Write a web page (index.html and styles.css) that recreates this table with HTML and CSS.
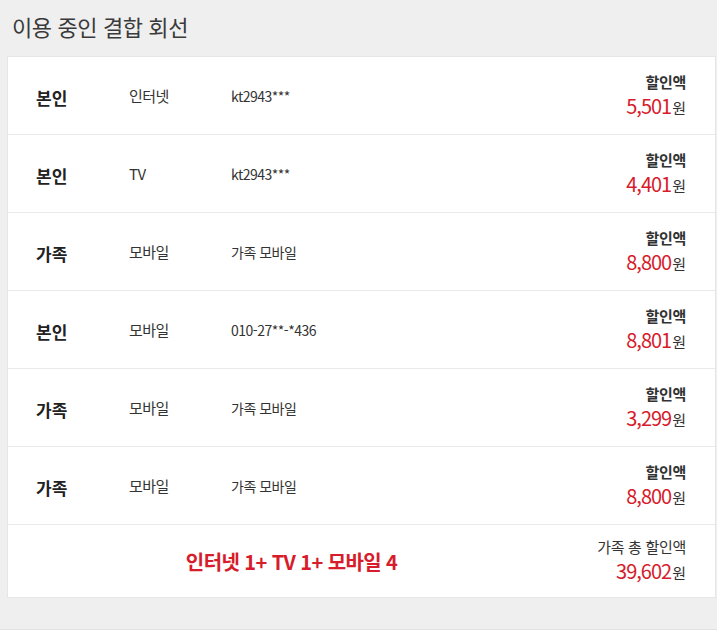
FILE: index.html
```html
<!DOCTYPE html>
<html lang="ko">
<head>
    <meta charset="UTF-8">
    <meta name="viewport" content="width=device-width, initial-scale=1.0">
    <title>이용 중인 결합 회선</title>
    <link rel="stylesheet" href="styles.css">
</head>
<body>
    <div class="page">
        <h2 class="title">이용 중인 결합 회선</h2>

        <ul class="lines">
            <li class="line">
                <span class="owner">본인</span>
                <span class="kind">인터넷</span>
                <span class="number">kt2943***</span>
                <div class="discount">
                    <span class="label">할인액</span>
                    <span class="amount"><em>5,501</em>원</span>
                </div>
            </li>
            <li class="line">
                <span class="owner">본인</span>
                <span class="kind">TV</span>
                <span class="number">kt2943***</span>
                <div class="discount">
                    <span class="label">할인액</span>
                    <span class="amount"><em>4,401</em>원</span>
                </div>
            </li>
            <li class="line">
                <span class="owner">가족</span>
                <span class="kind">모바일</span>
                <span class="number">가족 모바일</span>
                <div class="discount">
                    <span class="label">할인액</span>
                    <span class="amount"><em>8,800</em>원</span>
                </div>
            </li>
            <li class="line">
                <span class="owner">본인</span>
                <span class="kind">모바일</span>
                <span class="number">010-27**-*436</span>
                <div class="discount">
                    <span class="label">할인액</span>
                    <span class="amount"><em>8,801</em>원</span>
                </div>
            </li>
            <li class="line">
                <span class="owner">가족</span>
                <span class="kind">모바일</span>
                <span class="number">가족 모바일</span>
                <div class="discount">
                    <span class="label">할인액</span>
                    <span class="amount"><em>3,299</em>원</span>
                </div>
            </li>
            <li class="line">
                <span class="owner">가족</span>
                <span class="kind">모바일</span>
                <span class="number">가족 모바일</span>
                <div class="discount">
                    <span class="label">할인액</span>
                    <span class="amount"><em>8,800</em>원</span>
                </div>
            </li>
            <li class="line total">
                <span class="summary">인터넷 1+ TV 1+ 모바일 4</span>
                <div class="discount">
                    <span class="label">가족 총 할인액</span>
                    <span class="amount"><em>39,602</em>원</span>
                </div>
            </li>
        </ul>
    </div>
</body>
</html>
```

FILE: styles.css
```css
body {
    margin: 0;
    background-color: #efefef;
    font-family: "Noto Sans CJK KR", "Noto Sans", sans-serif;
    color: #333;
}

.page {
    height: 629px;
    padding: 0 1px 0 7px;
    border-bottom: 1px solid #e2e2e2;
}

.title {
    margin: 0;
    padding: 10px 0 0 5px;
    height: 46px;
    box-sizing: border-box;
    height: 56px;
    font-size: 22px;
    font-weight: 400;
    color: #3a3a3a;
    letter-spacing: -0.4px;
}

.lines {
    list-style: none;
    margin: 0;
    padding: 0;
    background-color: #fff;
    border: 1px solid #e6e6e6;
}

.line {
    display: flex;
    align-items: center;
    height: 77px;
    padding: 0 29px 0 28px;
    border-bottom: 1px solid #e9e9e9;
}

.line:last-child {
    border-bottom: none;
    height: 72px;
}

.owner {
    width: 93px;
    padding-top: 3px;
    font-size: 17px;
    font-weight: 700;
    color: #222;
}

.kind {
    width: 102px;
    font-size: 15px;
    color: #333;
    letter-spacing: -0.5px;
}

.number {
    flex: 1;
    font-size: 14px;
    color: #333;
    letter-spacing: -0.5px;
}

.discount {
    display: flex;
    flex-direction: column;
    align-items: flex-end;
}

.label {
    font-size: 15px;
    font-weight: 700;
    color: #333;
    line-height: 22px;
    letter-spacing: -0.3px;
}

.amount {
    font-size: 15px;
    color: #333;
    line-height: 26px;
}

.amount em {
    font-style: normal;
    font-size: 20px;
    color: #d71c2b;
    letter-spacing: -1px;
    margin-right: 1px;
}

.total .summary {
    flex: 1;
    text-align: center;
    padding-right: 50px;
    font-size: 20px;
    font-weight: 700;
    color: #d71c2b;
    letter-spacing: -0.6px;
}

.total .label {
    font-weight: 400;
}
```
